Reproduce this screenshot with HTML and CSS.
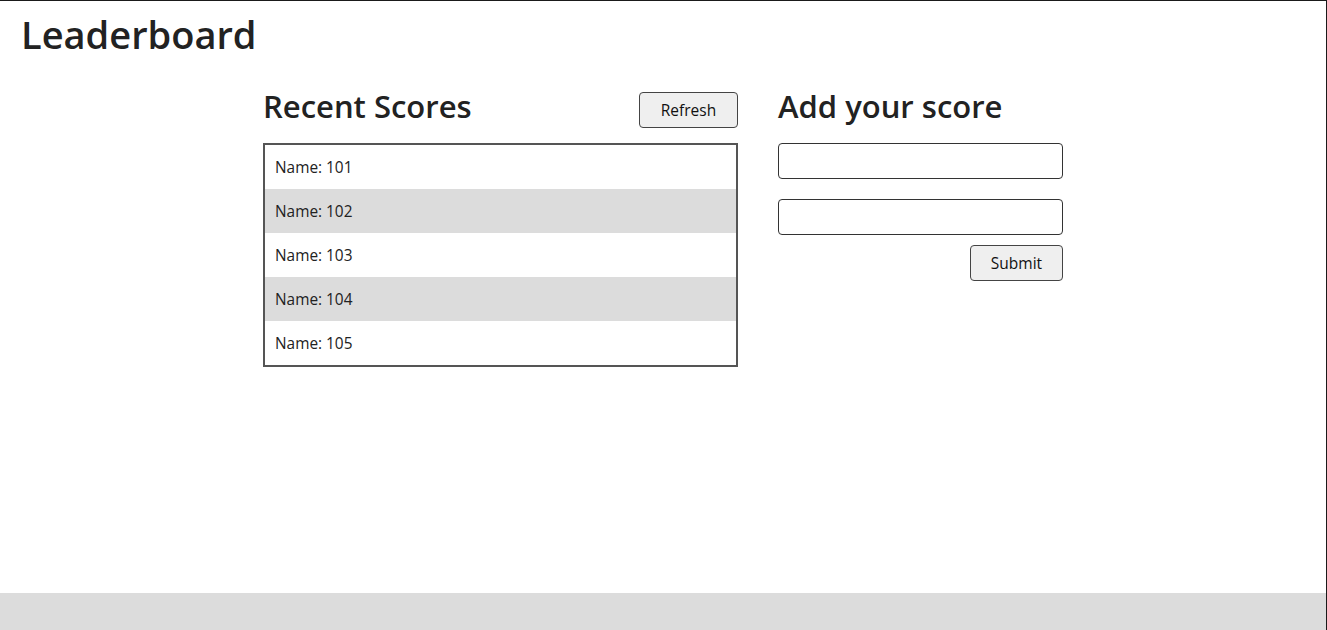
FILE: index.html
```html
<!DOCTYPE html>
<html lang="en">
<head>
<meta charset="utf-8">
<title>Leaderboard</title>
<link rel="stylesheet" href="styles.css">
</head>
<body>
<div class="page">
  <header class="site-header">
    <h1 class="site-title">Leaderboard</h1>
  </header>
  <main class="content">
    <section class="scores">
      <div class="section-head">
        <h2 class="section-title">Recent Scores</h2>
        <button class="btn btn-refresh" type="button">Refresh</button>
      </div>
      <ul class="score-list">
        <li class="score-row">Name: 101</li>
        <li class="score-row">Name: 102</li>
        <li class="score-row">Name: 103</li>
        <li class="score-row">Name: 104</li>
        <li class="score-row">Name: 105</li>
      </ul>
    </section>
    <section class="add">
      <h2 class="section-title add-title">Add your score</h2>
      <form class="add-form">
        <input class="field" type="text">
        <input class="field" type="text">
        <div class="form-actions">
          <button class="btn btn-submit" type="button">Submit</button>
        </div>
      </form>
    </section>
  </main>
  <footer class="site-footer"></footer>
</div>
</body>
</html>
```
FILE: styles.css
```css
* { box-sizing: border-box; }
html, body { margin: 0; padding: 0; }
body {
  font-family: "Open Sans", "Noto Sans", sans-serif;
  color: #222;
  background: #fff;
}
.page {
  height: 100vh;
  display: flex;
  flex-direction: column;
  border-top: 1px solid #1a1a1a;
  border-right: 1px solid #1a1a1a;
}
.site-header {
  padding: 7px 0 0 21px;
}
.site-title {
  margin: 0;
  font-size: 38px;
  font-weight: 600;
  line-height: 53px;
}
.content {
  flex: 1;
  display: grid;
  grid-template-columns: 475px 285px;
  column-gap: 40px;
  justify-content: center;
  align-content: start;
  padding-top: 25px;
}
.section-head {
  display: flex;
  justify-content: space-between;
  align-items: center;
  height: 47px;
  margin-bottom: 10px;
}
.section-title {
  margin: 0;
  font-size: 31px;
  font-weight: 600;
  line-height: 41px;
  padding-bottom: 6px;
  height: 47px;
}
.add-title { margin-bottom: 10px; }
.btn {
  font-family: inherit;
  font-size: 15.5px;
  color: #111;
  background: #efefef;
  border: 1px solid #444;
  border-radius: 4px;
  height: 36px;
  padding: 0;
  cursor: pointer;
}
.btn-refresh { width: 99px; }
.btn-submit { width: 93px; }
.score-list {
  list-style: none;
  margin: 0;
  padding: 0;
  border: 2px solid #555;
}
.score-row {
  height: 44px;
  line-height: 45px;
  padding-left: 10px;
  font-size: 15.4px;
}
.score-row:nth-child(even) { background: #dcdcdc; }
.add-form {
  display: flex;
  flex-direction: column;
}
.field {
  height: 36px;
  border: 1px solid #333;
  border-radius: 4px;
  margin-bottom: 20px;
  font-family: inherit;
  font-size: 15px;
  padding: 0 8px;
}
.field + .field { margin-bottom: 10px; }
.form-actions {
  display: flex;
  justify-content: flex-end;
}
.site-footer {
  height: 37px;
  background: #dcdcdc;
}
```
